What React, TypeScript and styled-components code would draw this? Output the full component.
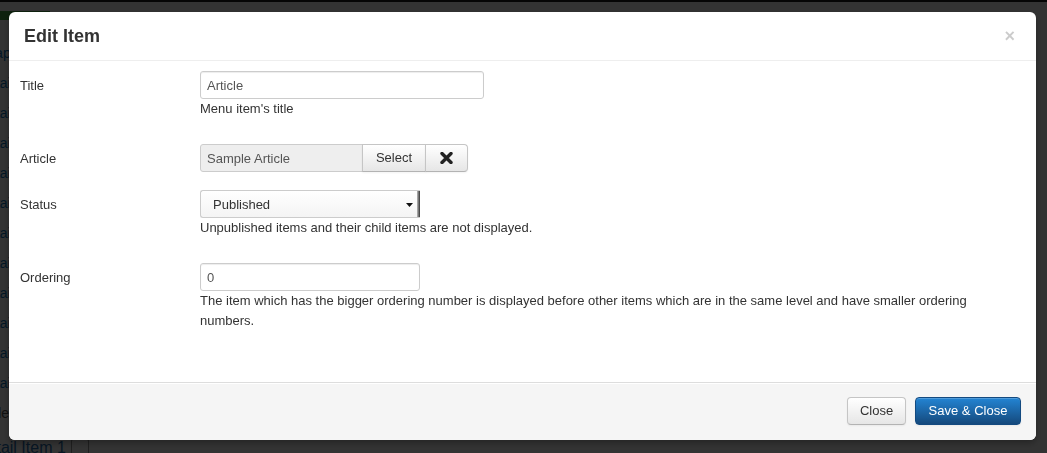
import React, { ReactElement } from "react";
import styled, { createGlobalStyle, css } from "styled-components";

const GlobalStyle = createGlobalStyle`
    html, body {
        margin: 0;
        padding: 0;
        background: #fff;
        font-family: "Liberation Sans", Helvetica, Arial, sans-serif;
        font-size: 13px;
        line-height: 18px;
        color: #333;
        overflow: hidden;
    }
`;

/* page sitting behind the dialog */
const Page = styled.div`
    width: 1047px;
    height: 453px;
    overflow: hidden;
`;

const NavBar = styled.div`
    height: 2px;
    background: #1b1b1b;
`;

const Toolbar = styled.div`
    display: flex;
    padding: 9px 0 0;
`;

const GreenButton = styled.div`
    width: 50px;
    height: 9px;
    background: #46a546;
`;

const ItemList = styled.ul`
    list-style: none;
    margin: 18px 0 0 -22px;
    padding: 0;
`;

const Item = styled.li<{ $muted?: boolean }>`
    height: 30px;
    line-height: 30px;
    color: #0a70b8;
    font-size: 14px;
    ${(p) =>
        p.$muted &&
        css`
            color: #555;
        `}
`;

const BottomRow = styled.div`
    display: flex;
    align-items: center;
    gap: 5px;
    height: 30px;
    margin: 5px 0 0 -24px;
    color: #2a6fb0;
    font-size: 16px;
`;

const Caret = styled.span`
    display: inline-block;
    width: 16px;
    height: 16px;
    border: 1px solid #999;
    border-radius: 2px;
`;

const Backdrop = styled.div`
    position: fixed;
    inset: 0;
    background: rgba(0, 0, 0, 0.8);
`;

/* dialog */
const Modal = styled.div`
    position: fixed;
    top: 12px;
    left: 9px;
    width: 1027px;
    height: 428px;
    display: flex;
    flex-direction: column;
    box-sizing: border-box;
    background: #fff;
    border-radius: 6px;
    box-shadow: 0 3px 7px rgba(0, 0, 0, 0.3);
    overflow: hidden;
`;

const ModalHeader = styled.div`
    display: flex;
    align-items: center;
    justify-content: space-between;
    padding: 9px 15px;
    border-bottom: 1px solid #eee;
`;

const Title = styled.h3`
    margin: 0;
    font-size: 18px;
    line-height: 30px;
    font-weight: bold;
    color: #333;
`;

const CloseX = styled.button`
    padding: 0;
    margin: 0 6px 0 0;
    border: 0;
    background: none;
    font-family: "Liberation Sans", Arial, sans-serif;
    font-size: 18px;
    font-weight: bold;
    line-height: 20px;
    color: #000;
    opacity: 0.2;
`;

const ModalBody = styled.div`
    flex: 1;
    padding: 10px 18px 10px 10px;
`;

const ControlGroup = styled.div`
    display: flex;
    margin-bottom: 18px;
`;

const ControlLabel = styled.label`
    width: 181px;
    flex-shrink: 0;
    padding: 6px 0 0 1px;
    box-sizing: border-box;
    line-height: 18px;
    color: #333;
`;

const Controls = styled.div`
    flex: 1;
    min-width: 0;
`;

const TextInput = styled.div<{ $width: number }>`
    width: ${(p) => p.$width}px;
    height: 28px;
    box-sizing: border-box;
    padding: 5px 6px 4px;
    border: 1px solid #ccc;
    border-radius: 3px;
    box-shadow: inset 0 1px 1px rgba(0, 0, 0, 0.075);
    line-height: 18px;
    color: #555;
`;

const HelpBlock = styled.div`
    line-height: 20px;
    margin-bottom: 7px;
    color: #333;
`;

const InputAppend = styled.div`
    display: flex;
    height: 28px;
`;

const ReadonlyField = styled.div`
    width: 163px;
    box-sizing: border-box;
    padding: 5px 6px 4px;
    line-height: 18px;
    background: #eee;
    border: 1px solid #ccc;
    border-radius: 3px 0 0 3px;
    color: #555;
`;

const Button = styled.button<{ $primary?: boolean; $width?: number; $joined?: boolean }>`
    height: 28px;
    box-sizing: border-box;
    padding: 4px 12px;
    font-family: inherit;
    font-size: 13px;
    line-height: 18px;
    color: #333;
    border: 1px solid #c5c5c5;
    border-bottom-color: #b3b3b3;
    border-radius: 4px;
    background: linear-gradient(#ffffff, #e6e6e6);
    box-shadow: inset 0 1px 0 rgba(255, 255, 255, 0.2), 0 1px 2px rgba(0, 0, 0, 0.05);
    display: flex;
    align-items: center;
    justify-content: center;
    ${(p) => p.$width && css`width: ${p.$width}px;`}
    ${(p) =>
        p.$joined &&
        css`
            border-radius: 0;
            margin-left: -1px;
            &:last-child {
                border-radius: 0 4px 4px 0;
            }
        `}
    ${(p) =>
        p.$primary &&
        css`
            color: #fff;
            border-color: #134a80;
            background: linear-gradient(#2384d3, #15497c);
        `}
`;

const SelectBox = styled.div`
    position: relative;
    width: 220px;
    height: 28px;
    box-sizing: border-box;
    padding: 5px 12px 4px;
    line-height: 18px;
    color: #333;
    border: 1px solid #ccc;
    border-right: 0;
    border-radius: 3px 0 0 3px;
    background: linear-gradient(#ffffff, #f4f4f4);
    display: flex;
    align-items: center;
    justify-content: space-between;
`;

const SelectEdge = styled.span`
    position: absolute;
    top: 0;
    right: 0;
    bottom: 0;
    width: 3px;
    background: linear-gradient(90deg, #bbb, #333);
`;

const ModalFooter = styled.div`
    display: flex;
    justify-content: flex-end;
    gap: 9px;
    padding: 14px 15px 15px;
    background: #f5f5f5;
    border-top: 1px solid #ddd;
    box-shadow: inset 0 1px 0 #fff;
`;

const RemoveIcon = (): ReactElement => (
    <svg width="13" height="12" viewBox="0 0 13 12">
        <path d="M2 1.5 L11 10.5 M11 1.5 L2 10.5" stroke="#222" strokeWidth="3.4" strokeLinecap="round" />
    </svg>
);

const Arrow = (): ReactElement => (
    <svg width="7" height="4" viewBox="0 0 7 4" style={{ marginRight: -5 }}>
        <path d="M0 0 L7 0 L3.5 4 Z" fill="#111" />
    </svg>
);

const items = [
    "Snapshot",
    "Detail Item 12",
    "Detail Item 11",
    "Detail Item 10",
    "Detail Item 9",
    "Detail Item 8",
    "Detail Item 7",
    "Detail Item 6",
    "Detail Item 5",
    "Detail Item 4",
    "Detail Item 3",
    "Detail Item 2",
    "Order"
];

const App = (): ReactElement => (
    <>
        <GlobalStyle />
        <Page>
            <NavBar />
            <Toolbar>
                <GreenButton />
            </Toolbar>
            <ItemList>
                {items.map((name) => (
                    <Item key={name} $muted={name === "Order"}>
                        {name}
                    </Item>
                ))}
            </ItemList>
            <BottomRow>
                Detail Item 1 <Caret />
            </BottomRow>
        </Page>
        <Backdrop />
        <Modal>
            <ModalHeader>
                <Title>Edit Item</Title>
                <CloseX type="button">×</CloseX>
            </ModalHeader>
            <ModalBody>
                <ControlGroup>
                    <ControlLabel>Title</ControlLabel>
                    <Controls>
                        <TextInput $width={284}>Article</TextInput>
                        <HelpBlock>Menu item&apos;s title</HelpBlock>
                    </Controls>
                </ControlGroup>
                <ControlGroup>
                    <ControlLabel>Article</ControlLabel>
                    <Controls>
                        <InputAppend>
                            <ReadonlyField>Sample Article</ReadonlyField>
                            <Button type="button" $joined $width={64}>
                                Select
                            </Button>
                            <Button type="button" $joined $width={43}>
                                <RemoveIcon />
                            </Button>
                        </InputAppend>
                    </Controls>
                </ControlGroup>
                <ControlGroup>
                    <ControlLabel>Status</ControlLabel>
                    <Controls>
                        <SelectBox>
                            Published
                            <Arrow />
                            <SelectEdge />
                        </SelectBox>
                        <HelpBlock>Unpublished items and their child items are not displayed.</HelpBlock>
                    </Controls>
                </ControlGroup>
                <ControlGroup>
                    <ControlLabel>Ordering</ControlLabel>
                    <Controls>
                        <TextInput $width={220}>0</TextInput>
                        <HelpBlock>
                            The item which has the bigger ordering number is displayed before other items which are in
                            the same level and have smaller ordering numbers.
                        </HelpBlock>
                    </Controls>
                </ControlGroup>
            </ModalBody>
            <ModalFooter>
                <Button type="button" $width={59}>
                    Close
                </Button>
                <Button type="button" $primary $width={106}>
                    Save &amp; Close
                </Button>
            </ModalFooter>
        </Modal>
    </>
);

export default App;
